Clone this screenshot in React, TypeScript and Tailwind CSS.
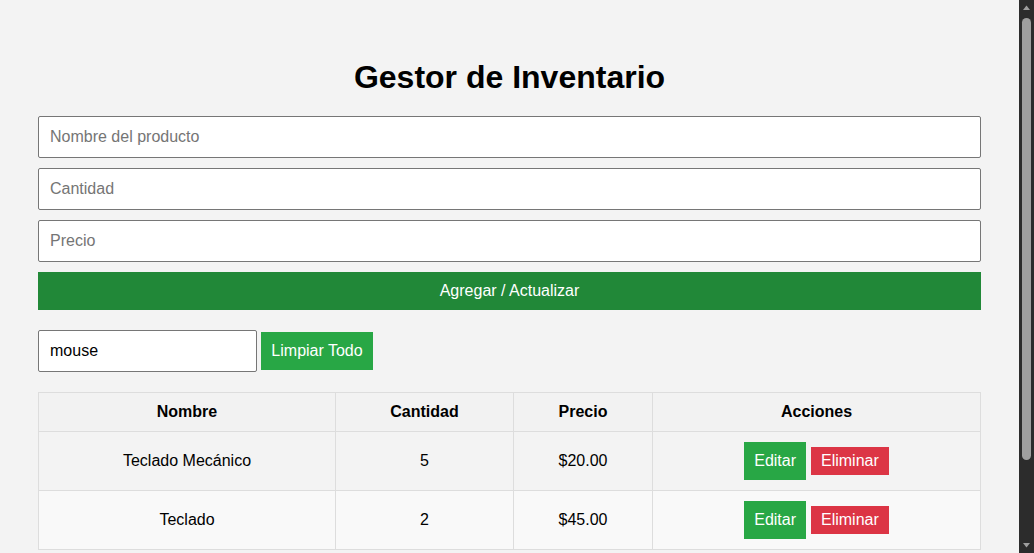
import React from "react";

const rows = [
  { nombre: "Teclado Mecánico", cantidad: 5, precio: "$20.00" },
  { nombre: "Teclado", cantidad: 2, precio: "$45.00" },
];

function Scrollbar() {
  return (
    <div className="w-[15px] h-full bg-[#2c2c2c] flex flex-col items-center shrink-0">
      <svg width="15" height="15" viewBox="0 0 15 15" className="shrink-0">
        <path d="M4 10 L7.5 5.5 L11 10 Z" fill="#9f9f9f" />
      </svg>
      <div className="w-[9px] h-[442px] mt-[3px] rounded-[5px] bg-[#9f9f9f]" />
      <div className="flex-1" />
      <svg width="15" height="15" viewBox="0 0 15 15" className="shrink-0">
        <path d="M4 5 L7.5 9.5 L11 5 Z" fill="#9f9f9f" />
      </svg>
    </div>
  );
}

export default function App() {
  return (
    <div
      className="h-screen flex overflow-hidden bg-[#f3f3f3] text-black"
      style={{ fontFamily: '"Liberation Sans", Arial, sans-serif' }}
    >
      <div className="flex-1 min-w-0 px-[38px] pt-[38px]">
        <h1 className="text-center text-[32px] font-bold leading-[37px] mt-[21px] mb-[20px]">
          Gestor de Inventario
        </h1>
        <div className="flex flex-col gap-[10px]">
          <input
            className="h-[42px] w-full bg-white border border-[#767676] rounded-[2px] px-[11px] text-[16px] placeholder:text-[#757575] outline-none"
            placeholder="Nombre del producto"
          />
          <input
            className="h-[42px] w-full bg-white border border-[#767676] rounded-[2px] px-[11px] text-[16px] placeholder:text-[#757575] outline-none"
            placeholder="Cantidad"
          />
          <input
            className="h-[42px] w-full bg-white border border-[#767676] rounded-[2px] px-[11px] text-[16px] placeholder:text-[#757575] outline-none"
            placeholder="Precio"
          />
          <button className="h-[38px] w-full bg-[#218838] text-white text-[16px]">
            Agregar / Actualizar
          </button>
        </div>
        <div className="flex items-center gap-[4px] mt-[20px]">
          <input
            className="h-[42px] w-[219px] bg-white border border-[#767676] rounded-[2px] px-[11px] text-[16px] outline-none"
            defaultValue="mouse"
          />
          <button className="h-[38px] w-[112px] bg-[#28a745] text-white text-[16px]">
            Limpiar Todo
          </button>
        </div>
        <table className="w-full mt-[20px] border-collapse table-fixed text-[16px]">
          <colgroup>
            <col className="w-[297px]" />
            <col className="w-[178px]" />
            <col className="w-[139px]" />
            <col />
          </colgroup>
          <thead>
            <tr className="bg-[#f2f2f2]">
              <th className="border border-[#dddddd] p-[10px] font-bold leading-[18px]">Nombre</th>
              <th className="border border-[#dddddd] p-[10px] font-bold leading-[18px]">Cantidad</th>
              <th className="border border-[#dddddd] p-[10px] font-bold leading-[18px]">Precio</th>
              <th className="border border-[#dddddd] p-[10px] font-bold leading-[18px]">Acciones</th>
            </tr>
          </thead>
          <tbody>
            {rows.map((r, i) => (
              <tr key={i} className={i % 2 === 1 ? "bg-[#f9f9f9]" : ""}>
                <td className="border border-[#dddddd] p-[10px] text-center">{r.nombre}</td>
                <td className="border border-[#dddddd] p-[10px] text-center">{r.cantidad}</td>
                <td className="border border-[#dddddd] p-[10px] text-center">{r.precio}</td>
                <td className="border border-[#dddddd] p-[10px] text-center">
                  <div className="flex items-center justify-center gap-[5px]">
                    <button className="h-[38px] px-[10px] bg-[#28a745] text-white leading-[18px]">
                      Editar
                    </button>
                    <button className="h-[28px] px-[10px] bg-[#dc3545] text-white leading-[18px]">
                      Eliminar
                    </button>
                  </div>
                </td>
              </tr>
            ))}
          </tbody>
        </table>
      </div>
      <Scrollbar />
    </div>
  );
}
